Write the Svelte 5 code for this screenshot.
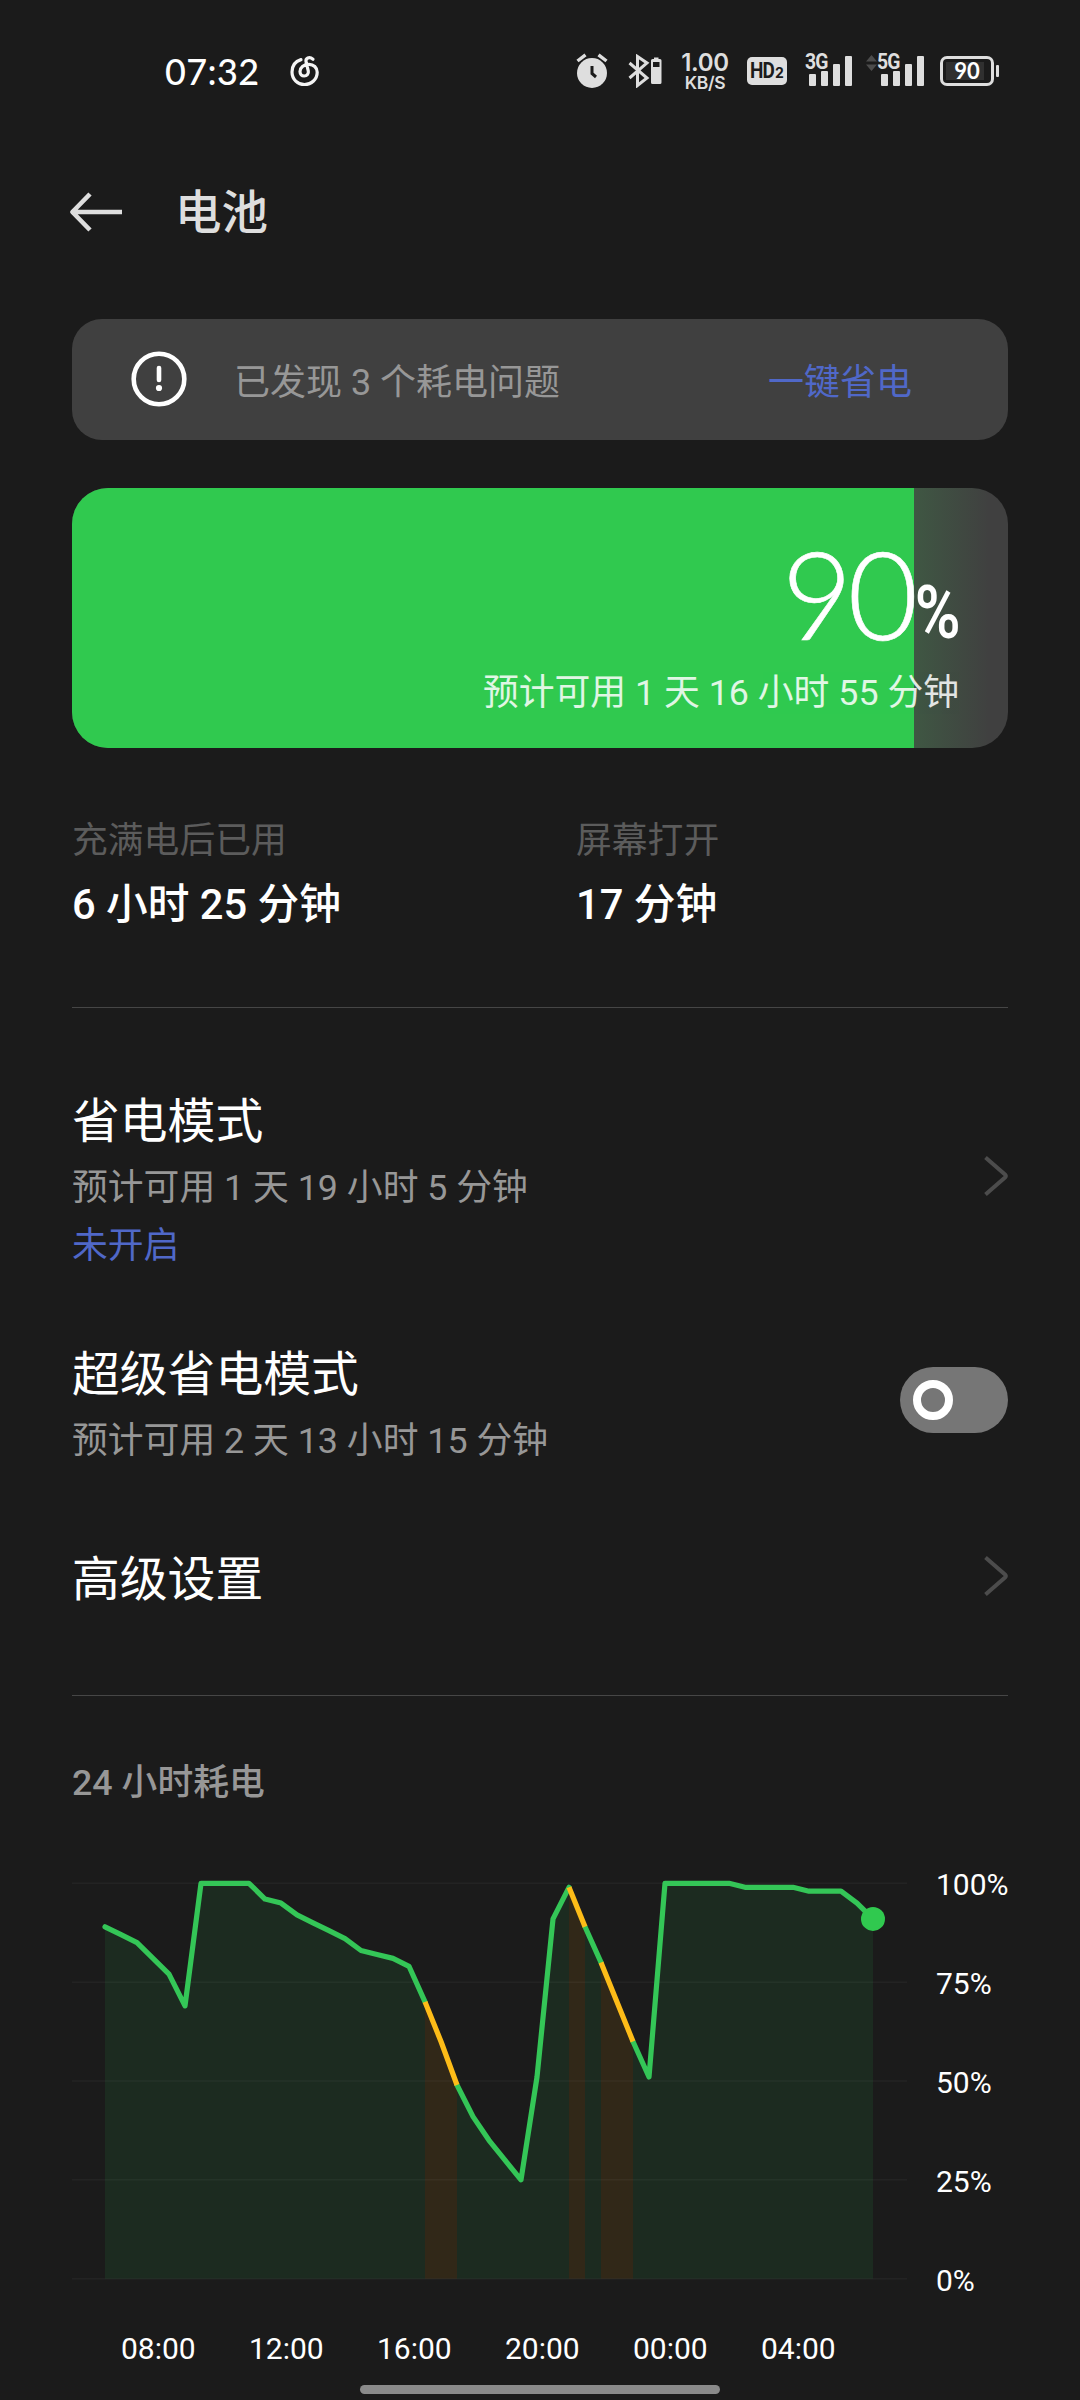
<script lang="ts">
    // battery level, one reading every 30 minutes
    const levels = [
        89, 87, 85, 81, 77, 69, 100, 100, 100, 100, 96, 95, 92, 90, 88, 86, 83,
        82, 81, 79, 70, 60, 49, 41, 35, 30, 25, 51, 91, 99, 89, 80, 70, 60, 51,
        100, 100, 100, 100, 100, 99, 99, 99, 99, 98, 98, 98, 95, 91
    ];
    // ranges with heavy drain, [from, to] as reading indexes
    const heavy = [[20, 22], [29, 30], [31, 33]];
    const hours = ['08:00', '12:00', '16:00', '20:00', '00:00', '04:00'];
    const marks = [100, 75, 50, 25, 0];

    const left = 33;
    const top = 15.3;
    const step = 16;
    const height = 395.4;

    const px = (i: number) => left + i * step;
    const py = (v: number) => top + (100 - v) / 100 * height;

    function line(from: number, to: number) {
        return levels.slice(from, to + 1)
            .map((v, i) => `${px(from + i)},${py(v).toFixed(1)}`)
            .join(' ');
    }

    function area(from: number, to: number) {
        return `${px(from)},${py(0)} ${line(from, to)} ${px(to)},${py(0)}`;
    }

    const last = levels.length - 1;
    const normal = [[0, 20], [22, 29], [30, 31], [33, last]];

    let level = $state(90);
    let superSaver = $state(false);
</script>

{#snippet chevron()}
    <svg class="chevron" width="24" height="42" viewBox="0 0 24 42">
        <path d="M1.5 2.5 L21 19.5 Q22.5 21 21 22.5 L1.5 39.5" />
    </svg>
{/snippet}

<div class="screen">
    <div class="status">
        <span class="clock">07:32</span>
        <svg class="music" width="30" height="32" viewBox="0 0 30 32">
            <path d="M11 4.6 C5.5 6.3 2 11 2 17 C2 24.5 7.8 29.5 14.5 29.5 C21.5 29.5 27.2 24.3 27.2 17.3 C27.2 12.5 23.5 9.3 19 9.3 C13.5 9.3 10 12.5 10 16.5 C10 19.3 11.8 21 14.2 21 C17 21 18.8 18.8 18.3 16 L16 6.5 C15.5 3.5 19 1 23 4.2" />
        </svg>
        <div class="tray">
            <svg width="32" height="36" viewBox="0 0 32 36">
                <circle cx="16" cy="20" r="15" fill="#dedede" />
                <path d="M1.5 8 L9.5 1.8 M30.5 8 L22.5 1.8" stroke="#dedede" stroke-width="3.4" />
                <path d="M16 13 V20.5 L20 24" stroke="#1b1b1b" stroke-width="3" fill="none" />
            </svg>
            <svg class="bluetooth" width="34" height="34" viewBox="0 0 34 34">
                <path d="M1.5 9 L19 24 L9.5 31.5 V2.5 L19 9 L1.5 24" stroke="#dedede" stroke-width="3" fill="none" />
                <path d="M26 3.5 H30.5 V5 H32 Q33.5 5 33.5 6.5 V28.5 Q33.5 30 32 30 H24.5 Q23 30 23 28.5 V6.5 Q23 5 24.5 5 H26 Z" fill="#dedede" />
                <rect x="25" y="8" width="6.5" height="5" fill="#1b1b1b" />
            </svg>
            <div class="speed">
                <b>1.00</b>
                <small>KB/S</small>
            </div>
            <div class="hd"><b>HD</b><small>2</small></div>
            <div class="signal first">
                <span>3G</span>
                <i style="height: 12px"></i><i style="height: 15px"></i><i style="height: 22px"></i><i style="height: 30px"></i>
            </div>
            <div class="signal second">
                <svg width="11" height="16" viewBox="0 0 11 16">
                    <path d="M0 6.5 L5.5 0 L11 6.5 Z M0 9.5 L5.5 16 L11 9.5 Z" fill="#4c4c4c" />
                </svg>
                <span>5G</span>
                <i style="height: 12px"></i><i style="height: 15px"></i><i style="height: 22px"></i><i style="height: 30px"></i>
            </div>
            <div class="cell"><span>{level}</span></div>
            <div class="cap"></div>
        </div>
    </div>

    <header>
        <svg width="54" height="42" viewBox="0 0 54 42">
            <path d="M21 3 L3.4 21 L21 39 M4 21 H53" />
        </svg>
        <h1>电池</h1>
    </header>

    <main>
        <div class="notice">
            <svg width="56" height="56" viewBox="0 0 56 56">
                <circle cx="28" cy="28" r="25.3" fill="none" stroke="#fff" stroke-width="4.6" />
                <path d="M28 17 V29" stroke="#fff" stroke-width="4.6" stroke-linecap="round" />
                <circle cx="28" cy="37" r="3.1" fill="#fff" />
            </svg>
            <span>已发现 3 个耗电问题</span>
            <a href="#save">一键省电</a>
        </div>

        <div class="battery">
            <div class="fill" style="width: {level}%"></div>
            <div class="info">
                <div class="percent">{level}<span>%</span></div>
                <div class="remain">预计可用 1 天 16 小时 55 分钟</div>
            </div>
        </div>

        <div class="stats">
            <div>
                <div class="label">充满电后已用</div>
                <div class="value">6 小时 25 分钟</div>
            </div>
            <div>
                <div class="label">屏幕打开</div>
                <div class="value">17 分钟</div>
            </div>
        </div>

        <section>
            <div class="row saver">
                <div>
                    <h2>省电模式</h2>
                    <p>预计可用 1 天 19 小时 5 分钟</p>
                    <p class="state">未开启</p>
                </div>
                {@render chevron()}
            </div>
            <div class="row super">
                <div>
                    <h2>超级省电模式</h2>
                    <p>预计可用 2 天 13 小时 15 分钟</p>
                </div>
                <button class="toggle" class:on={superSaver} aria-label="超级省电模式" onclick={() => superSaver = !superSaver}>
                    <span class="knob"></span>
                </button>
            </div>
            <div class="row advanced">
                <h2>高级设置</h2>
                {@render chevron()}
            </div>
        </section>

        <h3>24 小时耗电</h3>
        <div class="chart">
            <svg width="836" height="426" viewBox="0 0 836 426">
                {#each normal as [from, to]}
                    <polygon points={area(from, to)} fill="#1c2b20" />
                {/each}
                {#each heavy as [from, to]}
                    <polygon points={area(from, to)} fill="#312818" />
                {/each}
                {#each marks as m}
                    <path d="M0 {py(m)} H835" stroke="#fff" stroke-opacity="0.04" stroke-width="1.5" />
                {/each}
                {#each normal as [from, to]}
                    <polyline points={line(from, to)} stroke="#34c657" />
                {/each}
                {#each heavy as [from, to]}
                    <polyline class="heavy" points={line(from, to)} stroke="#fdbc18" />
                {/each}
                <circle cx={px(last)} cy={py(levels[last])} r="12" fill="#30c94f" />
            </svg>
            <div class="marks">
                {#each marks as m}
                    <span>{m}%</span>
                {/each}
            </div>
        </div>
        <div class="hours">
            {#each hours as h}
                <span>{h}</span>
            {/each}
        </div>
    </main>

    <div class="home"></div>
</div>

<style>
    :global(body) {
        background: #1b1b1b;
    }

    .screen {
        width: 1080px;
        height: 2400px;
        overflow: hidden;
        display: flex;
        flex-direction: column;
        background: #1b1b1b;
        color: #fff;
        font-family: Roboto, "Noto Sans CJK SC", sans-serif;
    }

    .status {
        height: 142px;
        flex: none;
        display: flex;
        align-items: center;
        padding: 0 81px 0 165px;
    }

    .clock {
        width: 125px;
        font: 500 36px/40px Lato, sans-serif;
        letter-spacing: 0.4px;
        white-space: nowrap;
    }

    .music {
        fill: none;
        stroke: #f4f4f4;
        stroke-width: 3.2;
        stroke-linecap: round;
    }

    .tray {
        margin-left: auto;
        display: flex;
        align-items: center;
        color: #dedede;
    }

    .bluetooth {
        margin-left: 20px;
    }

    .speed {
        width: 52px;
        margin-left: 17px;
        padding-top: 3px;
        text-align: center;
        display: flex;
        flex-direction: column;
    }

    .speed b {
        font: 600 24px/20px Inter, sans-serif;
        letter-spacing: -0.3px;
    }

    .speed small {
        font: 600 17.5px/19px Inter, sans-serif;
        letter-spacing: -0.4px;
    }

    .hd {
        width: 40px;
        height: 28px;
        margin-left: 16px;
        border-radius: 5px;
        background: #dedede;
        color: #1b1b1b;
        display: flex;
        justify-content: center;
        align-items: baseline;
    }

    .hd b {
        width: 25px;
        font: 700 22px/28px Roboto, sans-serif;
        letter-spacing: -1px;
        transform: scaleX(0.86);
        transform-origin: 0 0;
    }

    .hd small {
        font: 700 14px/14px Inter, sans-serif;
    }

    .signal {
        position: relative;
        height: 30px;
        display: flex;
        align-items: flex-end;
        gap: 5px;
    }

    .signal i {
        width: 7px;
        border-radius: 1px;
        background: #dedede;
    }

    .signal span {
        position: absolute;
        left: -4px;
        top: -5px;
        font: 700 22px/22px Roboto, sans-serif;
        letter-spacing: -1px;
        text-shadow: 0 2px #1b1b1b, 1px 1px #1b1b1b;
        transform: scaleX(0.88);
        transform-origin: 0 0;
    }

    .signal svg {
        position: absolute;
        left: -15px;
        top: -1px;
    }

    .first {
        margin-left: 22px;
    }

    .second {
        margin-left: 29px;
    }

    .cell {
        width: 54px;
        height: 30px;
        box-sizing: border-box;
        margin-left: 16px;
        border: 3px solid #dedede;
        border-radius: 7px;
        padding: 3px 7px 3px 3px;
    }

    .cell span {
        display: block;
        height: 18px;
        background: #303030;
        color: #fff;
        font: 700 22px/18px Lato, sans-serif;
        text-align: center;
        padding-left: 4px;
    }

    .cap {
        width: 3px;
        height: 12px;
        margin-left: 2px;
        border-radius: 1px;
        background: #dedede;
    }

    header {
        height: 140px;
        flex: none;
        display: flex;
        align-items: center;
        padding: 0 0 0 69px;
        margin-bottom: 37px;
    }

    header svg {
        fill: none;
        stroke: #dedede;
        stroke-width: 4.6;
        stroke-linejoin: round;
    }

    h1 {
        margin: 2px 0 0 52px;
        font-size: 46.5px;
        line-height: 60px;
        font-weight: 500;
        color: #dedede;
    }

    main {
        width: 936px;
        margin: 0 auto;
    }

    .notice {
        height: 121px;
        box-sizing: border-box;
        padding: 0 96px 2px 59px;
        display: flex;
        align-items: center;
        border-radius: 30px;
        background: #404040;
        font-size: 36px;
        color: #979797;
    }

    .notice span {
        margin-left: 47px;
    }

    .notice a {
        margin-left: auto;
        color: #5068c8;
        text-decoration: none;
    }

    .battery {
        height: 260px;
        margin-top: 48px;
        display: grid;
        border-radius: 36px;
        overflow: hidden;
        background: linear-gradient(90deg, #3f5743 90%, #404040 98%);
    }

    .battery > div {
        grid-area: 1 / 1;
    }

    .fill {
        background: #30c94f;
    }

    .info {
        padding: 46px 48px 0 0;
        text-align: right;
    }

    .percent {
        height: 118px;
        font: 300 122px/118px Lato, sans-serif;
        letter-spacing: -5px;
        -webkit-text-stroke: 0.6px #fff;
    }

    .percent span {
        display: inline-block;
        font: 600 74px/80px Roboto, sans-serif;
        letter-spacing: 0;
        margin: 0 -1px 0 -7px;
        transform: translateY(-2px) scaleX(0.84);
        transform-origin: 100% 0;
        -webkit-text-stroke: 0;
    }

    .remain {
        margin: 15px 1px 0 0;
        font-size: 35.8px;
        line-height: 52px;
        opacity: 0.85;
    }

    .stats {
        height: 260px;
        box-sizing: border-box;
        padding-top: 67px;
        display: grid;
        grid-template-columns: 504px 1fr;
        border-bottom: 1px solid #464646;
    }

    .label {
        font-size: 35.8px;
        line-height: 52px;
        color: #5c5c5c;
    }

    .value {
        margin-top: 8px;
        font-size: 41.7px;
        line-height: 60px;
        font-weight: 500;
    }

    section {
        height: 688px;
        box-sizing: border-box;
        border-bottom: 1px solid #464646;
        padding-top: 77px;
    }

    .row {
        display: flex;
        align-items: center;
        justify-content: space-between;
    }

    .saver {
        height: 182px;
    }

    .saver > div {
        padding-top: 8px;
    }

    .super {
        height: 128px;
        margin-top: 73px;
    }

    .advanced {
        height: 90px;
        margin-top: 67px;
    }

    h2 {
        margin: 0;
        font-size: 47.8px;
        line-height: 70px;
        font-weight: 400;
    }

    p {
        margin: 4px 0 0;
        font-size: 35.8px;
        line-height: 54px;
        color: #979797;
    }

    p.state {
        color: #5068c8;
    }

    .chevron {
        fill: none;
        stroke: #4c4c4c;
        stroke-width: 4;
    }

    .advanced .chevron {
        margin-bottom: 8px;
    }

    .toggle {
        width: 108px;
        height: 66px;
        padding: 13px;
        margin-bottom: 8px;
        border: none;
        border-radius: 33px;
        background: #767676;
        display: flex;
    }

    .toggle.on {
        justify-content: flex-end;
        background: #30c94f;
    }

    .knob {
        width: 40px;
        height: 40px;
        box-sizing: border-box;
        border: 8px solid #fff;
        border-radius: 50%;
    }

    h3 {
        margin: 61px 0 0;
        font-size: 35.8px;
        line-height: 52px;
        font-weight: 500;
        color: #979797;
    }

    .chart {
        height: 426px;
        margin-top: 59px;
        display: flex;
    }

    .chart svg {
        flex: none;
    }

    .chart polyline {
        fill: none;
        stroke-width: 5.2;
        stroke-linecap: round;
        stroke-linejoin: round;
    }

    .chart .heavy {
        stroke-linecap: butt;
    }

    .marks {
        height: 426px;
        margin: 2px 0 0 28px;
        display: flex;
        flex-direction: column;
        justify-content: space-between;
        font-size: 30px;
        line-height: 30px;
        white-space: nowrap;
    }

    .hours {
        margin-top: 37px;
        padding-left: 22px;
        display: grid;
        grid-template-columns: repeat(6, 128px);
        font-size: 30px;
        line-height: 36px;
    }

    .hours span {
        width: 128px;
        margin-left: 27px;
    }

    .home {
        width: 360px;
        height: 9px;
        margin: 18px auto 0;
        border-radius: 5px;
        background: #8a8a8a;
    }
</style>
